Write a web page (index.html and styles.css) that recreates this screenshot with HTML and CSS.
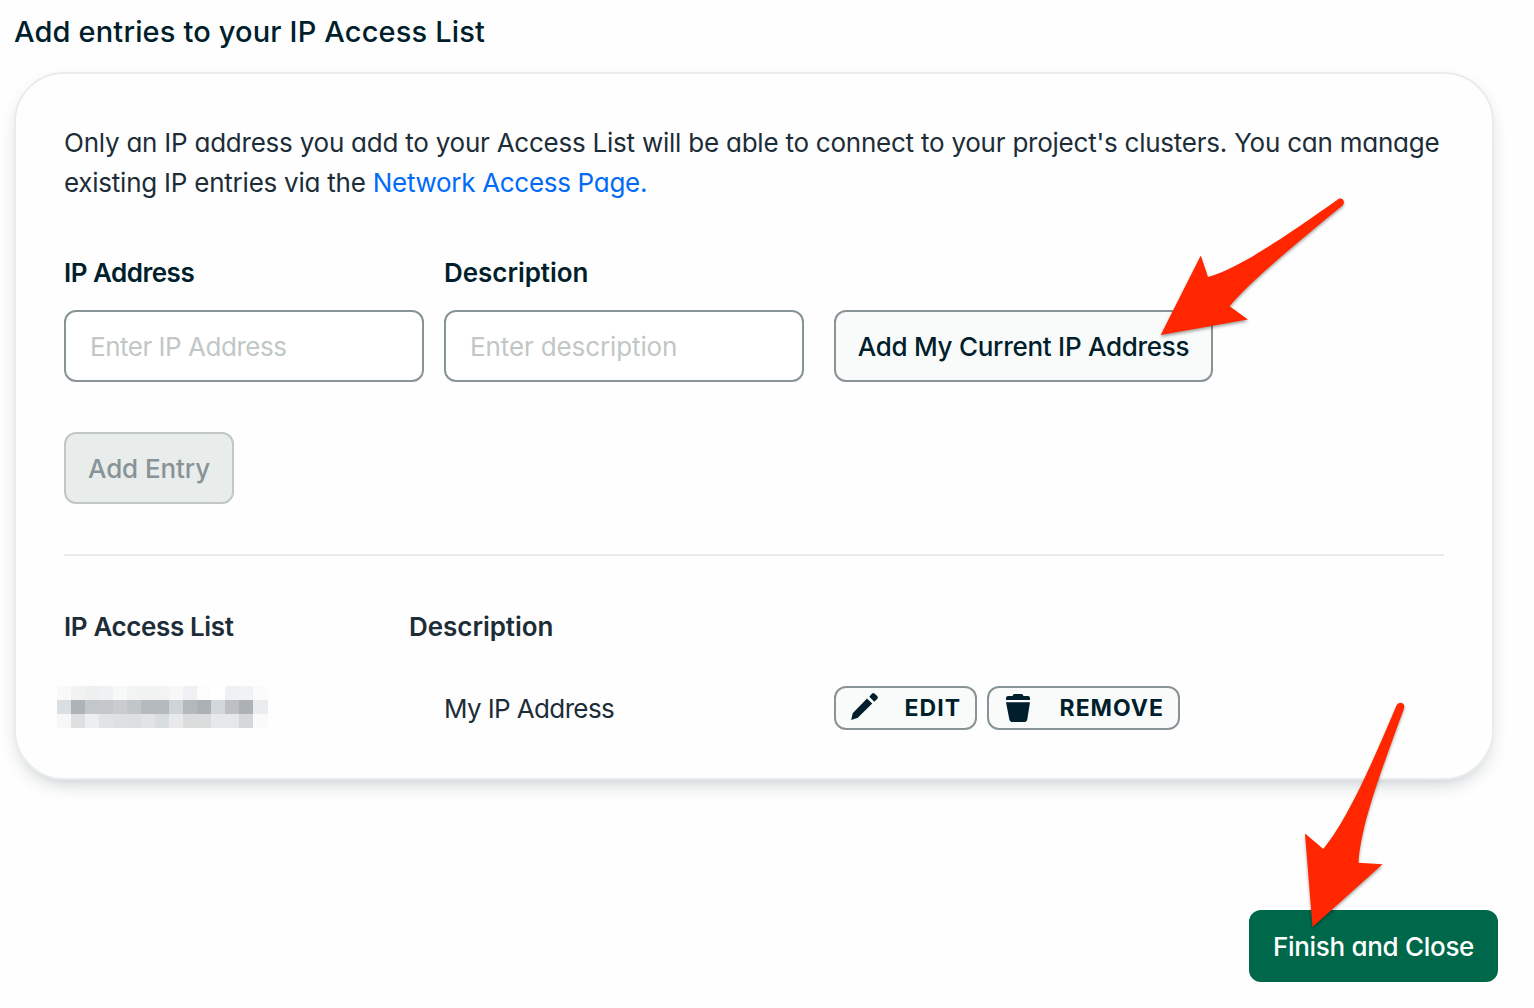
FILE: index.html
```
<!DOCTYPE html>
<html lang="en">
<head>
<meta charset="utf-8">
<title>IP Access List</title>
<link rel="stylesheet" href="styles.css">
</head>
<body>
<main class="page">
  <h1 class="title">Add entries to your IP Access List</h1>
  <section class="card">
    <p class="intro">Only an IP address you add to your Access List will be able to connect to your project's clusters. You can manage<br>existing IP entries via the <a class="link">Network Access Page.</a></p>
    <form class="entry-form">
      <label class="field"><span class="label label-ip">IP Address</span><span class="input input-ip">Enter IP Address</span></label>
      <label class="field"><span class="label">Description</span><span class="input">Enter description</span></label>
      <button type="button" class="btn btn-current">Add My Current IP Address</button>
    </form>
    <button type="button" class="btn btn-disabled">Add Entry</button>
    <hr class="rule">
    <div class="list-head"><span class="head-ip">IP Access List</span><span>Description</span></div>
    <div class="list-row">
      <div class="redacted"><svg id="mosaic" width="211" height="42" shape-rendering="crispEdges"></svg></div>
      <span class="desc">My IP Address</span>
      <div class="actions">
        <button type="button" class="small edit"><svg width="28" height="28" viewBox="0 0 28 28"><path d="M18.300 4.700 20.800 1.800q1.300-1.400 2.900 0l2.500 2.300q1.300 1.300.2 2.700L23.300 9.800zM16 6.500l5.200 5L6.800 25.800.2 28l1.500-6.800z"/></svg>EDIT</button>
        <button type="button" class="small remove"><svg width="24" height="28" viewBox="0 0 24 28"><path d="M7 1Q7.400 0 8.600 0h6.800Q16.600 0 17 1l.4.900h4.400Q24 1.900 24 4.100V6H0V4.100Q0 1.900 2.200 1.900h4.400zM0 8.200h24l-2.700 17q-.5 2.800-3.300 2.800H6.600q-2.800 0-3.300-2.800z"/></svg>REMOVE</button>
      </div>
    </div>
  </section>
  <footer class="footer"><button type="button" class="btn btn-finish">Finish and Close</button></footer>
</main>
<svg class="arrow" width="1534" height="1008" viewBox="0 0 1534 1008">
  <path d="M1160.700 335 1200.800 255.500 1208 277C1239 269 1290 233 1338.500 199C1342.500 197 1346 202 1342.500 205.500C1303 238 1248 283 1229.600 306.300L1248 319.500Z"/>
  <path d="M1312.500 927 1305 833.500 1323.300 849C1349 818 1375 756 1396.500 705.500C1399 700.500 1406 703 1404 708.500C1382 769 1361 823 1358.500 862.800L1382.500 864.300Z"/>
</svg>
<script src="script.js"></script>
</body>
</html>
```
FILE: styles.css
```
* { box-sizing: border-box; }
body { margin: 0; background: #fefefe; color: #1c2d38; font: 400 26px/40px Inter, "Noto Sans", sans-serif; font-feature-settings: "cv11"; }
.page { width: 1534px; height: 1008px; padding: 12px 36px 26px 14px; display: flex; flex-direction: column; overflow: hidden; }
.title { margin: 0 0 20px; font-size: 29px; line-height: 40px; font-weight: 500; letter-spacing: .16px; color: #001e2b; }
.card { width: 1480px; height: 708px; padding: 49px 48px; border: 2px solid #e8edeb; border-radius: 50px; background: #fefefe; box-shadow: 0 8px 20px -8px rgba(0, 30, 43, .3); }
.intro { margin: 0 0 50px; white-space: nowrap; letter-spacing: -.235px; }
.link { color: #016bf8; letter-spacing: -.3px; }
.entry-form { display: flex; align-items: flex-end; }
.field { width: 360px; margin-right: 20px; }
.field + .field { margin-right: 30px; }
.label { display: block; font-weight: 600; color: #001e2b; margin-bottom: 17px; letter-spacing: -.05px; }
.label-ip { letter-spacing: -.5px; }
.input { display: flex; align-items: center; height: 72px; padding: 2px 24px 0; border: 2px solid #889397; border-radius: 12px; background: #fff; color: #c1c7c6; letter-spacing: -.12px; }
.input-ip { letter-spacing: -.48px; }
.btn { display: flex; align-items: center; justify-content: center; height: 72px; padding: 2px 0 0; border: 2px solid #889397; border-radius: 12px; background: #f9fbfa; color: #001e2b; font: inherit; font-weight: 500; font-feature-settings: inherit; white-space: nowrap; }
.btn-current { width: 379px; letter-spacing: -.27px; }
.btn-disabled { width: 170px; margin-top: 50px; background: #e8edeb; border-color: #c1c7c6; color: #889397; letter-spacing: -.1px; }
.rule { height: 2px; margin: 50px 0 51px; border: 0; background: #e8edeb; }
.list-head { display: grid; grid-template-columns: 345px 1fr; font-weight: 600; letter-spacing: -.05px; }
.head-ip { letter-spacing: -.38px; }
.list-row { display: grid; grid-template-columns: 380px 390px 1fr; margin-top: 39px; height: 44px; }
.redacted { margin-left: -7px; height: 42px; }
.redacted svg { display: block; }
.desc { padding-top: 3px; letter-spacing: -.62px; }
.actions { display: flex; gap: 10px; }
.small { display: flex; align-items: center; justify-content: space-between; height: 44px; padding: 0 14px 0 15px; border: 2px solid #889397; border-radius: 12px; background: #f9fbfa; color: #001e2b; font: inherit; font-size: 23px; font-weight: 700; letter-spacing: 1px; }
.small svg { fill: #001e2b; }
.edit { width: 143px; }
.edit svg { margin-top: -4px; }
.remove { width: 193px; padding-left: 17px; }
.footer { display: flex; justify-content: flex-end; margin-top: auto; }
.btn-finish { width: 249px; background: #00684a; border-color: #00684a; color: #fff; letter-spacing: -.3px; }
.arrow { position: absolute; left: 0; top: 0; fill: #ff2600; pointer-events: none; filter: drop-shadow(0 2px 1.5px rgba(0, 0, 0, .35)); }
```
FILE: script.js
```
const rows = [
  "f9f9f9 f1f3f2 eef0ef f0f1f3 f7f9f8 f2f4f3 f1f3f2 f2f3f5 f7f7f7 eff0f3 fcfcfc ffffff eff0f3 f1f2f5 fbfbfb",
  "d9dfe2 adb3b7 c1c7ca c4c8ca caccd0 c1c6c9 b4babe b4babe d0d4d7 b3b9bd acb1b5 d3d8da bdbfc4 abb1b5 ebecee",
  "f7f7f7 dedfe0 edeef0 e2e3e5 dfe0e2 dce0e1 e2e3e5 d8dde0 e8e9eb dcdcdd dbdcdd e7e8ea e6e7e8 d6d7d9 fafafa"
];
document.getElementById("mosaic").innerHTML = rows.map((row, y) => row.split(" ").map((c, x) =>
  `<rect x="${x * 14}" y="${y * 14}" width="15" height="14" fill="#${c}"/>`).join("")).join("");
```
